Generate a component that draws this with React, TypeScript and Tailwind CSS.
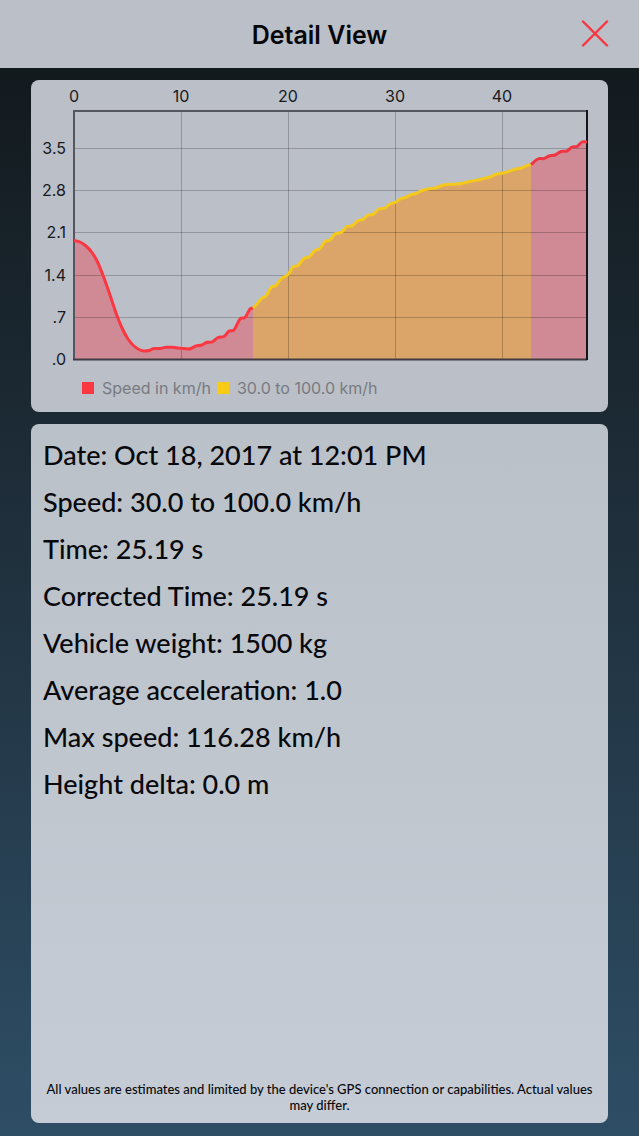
import React from 'react';

type Point = [number, number];

const details = [
  { label: 'Date', value: 'Oct 18, 2017 at 12:01 PM' },
  { label: 'Speed', value: '30.0 to 100.0 km/h' },
  { label: 'Time', value: '25.19 s' },
  { label: 'Corrected Time', value: '25.19 s' },
  { label: 'Vehicle weight', value: '1500 kg' },
  { label: 'Average acceleration', value: '1.0' },
  { label: 'Max speed', value: '116.28 km/h' },
  { label: 'Height delta', value: '0.0 m' },
];

const xTicks = [
  { x: 43, label: '0' },
  { x: 150, label: '10' },
  { x: 257, label: '20' },
  { x: 364, label: '30' },
  { x: 471, label: '40' },
];

const yTicks = [
  { y: 68, label: '3.5' },
  { y: 110, label: '2.8' },
  { y: 152, label: '2.1' },
  { y: 195, label: '1.4' },
  { y: 237, label: '.7' },
  { y: 279, label: '.0' },
];

const before: Point[] = [
  [43, 160.5], [49, 162], [55, 166], [61, 172.5], [67, 183], [73, 198], [79, 215], [85, 233],
  [91, 248], [97, 259], [103, 266], [109, 270], [113, 271], [118, 270.5], [122, 268.7], [129, 268.5],
  [135, 267.3], [141, 267.3], [150, 268.3], [157, 269], [161, 268], [165, 266], [171, 265],
  [176, 262.3], [181, 262], [187, 257.5], [193, 256.5], [198, 251], [203, 250], [209, 239],
  [214, 237.5], [219, 229], [222, 228],
];

const range: Point[] = [
  [222, 228], [226, 224], [231, 218], [235, 216], [240, 207.5], [245, 205.5], [250, 199], [257, 194.5],
  [262, 187], [267, 185.5], [273, 178.5], [278, 177], [284, 170.5], [289, 168.5], [294, 161.5],
  [299, 160], [304, 154], [310, 152.5], [316, 146.5], [321, 146], [327, 140.5], [332, 139.5],
  [337, 135], [342, 134.5], [348, 129], [354, 128], [359, 124], [365, 122], [370, 118.5],
  [375, 117.5], [380, 114.5], [385, 113.5], [390, 111], [396, 109.2], [405, 107.8], [412, 105],
  [419, 104.3], [427, 104], [439, 101.5], [451, 99], [459, 97], [466, 94], [472, 93], [479, 91],
  [485, 89], [491, 88], [496, 85.5], [500, 84.5],
];

const after: Point[] = [
  [500, 84.5], [507, 79], [513, 78.5], [518, 76], [524, 75], [530, 71.5], [536, 71], [541, 67],
  [546, 66.5], [551, 62], [556, 62],
];

// Catmull-Rom spline through the samples
const toLine = (pts: Point[]) =>
  pts.reduce((d, p, i) => {
    if (i === 0) return `M${p[0]} ${p[1]}`;
    const p0 = pts[Math.max(i - 2, 0)];
    const p1 = pts[i - 1];
    const p3 = pts[Math.min(i + 1, pts.length - 1)];
    const c1 = `${p1[0] + (p[0] - p0[0]) / 6} ${p1[1] + (p[1] - p0[1]) / 6}`;
    const c2 = `${p[0] - (p3[0] - p1[0]) / 6} ${p[1] - (p3[1] - p1[1]) / 6}`;
    return `${d} C${c1} ${c2} ${p[0]} ${p[1]}`;
  }, '');

const toArea = (pts: Point[]) => `${toLine(pts)} V279.5 H${pts[0][0]} Z`;

const SpeedChart = () => (
  <svg
    viewBox="0 0 577 286"
    className="block w-full overflow-visible font-['Inter',sans-serif]"
    role="img"
    aria-label="Speed chart"
  >
    {/* Filled areas */}
    <path d={toArea(before)} fill="#ee4150" fillOpacity="0.42" />
    <path d={toArea(range)} fill="#f0932a" fillOpacity="0.6" />
    <path d={toArea(after)} fill="#ee4150" fillOpacity="0.42" />

    {/* Grid */}
    <g stroke="#000" strokeOpacity="0.22" strokeWidth="1">
      {xTicks.slice(1).map((t) => (
        <path key={t.label} d={`M${t.x + 0.5} 31V279`} />
      ))}
      {yTicks.slice(0, 5).map((t) => (
        <path key={t.label} d={`M43 ${t.y + 0.5}H556`} />
      ))}
    </g>

    {/* Frame */}
    <path d="M43 280V31H556" fill="none" stroke="#55575e" strokeWidth="2" />
    <path d="M42 279.5H556" stroke="#3f3c42" strokeWidth="2" />
    <path d="M556 30V280" stroke="#17151a" strokeWidth="2" />

    <g fill="none" strokeWidth="3" strokeLinejoin="round">
      <path d={toLine(before)} stroke="#fb3742" />
      <path d={toLine(range)} stroke="#f5c91c" />
      <path d={toLine(after)} stroke="#f13442" />
    </g>

    <g fill="#17191d" fontSize="16">
      {xTicks.map((t) => (
        <text key={t.label} x={t.x} y="22" textAnchor="middle">{t.label}</text>
      ))}
      {yTicks.map((t) => (
        <text key={t.label} x="35" y={t.y + 6} textAnchor="end">{t.label}</text>
      ))}
    </g>
  </svg>
);

const App = () => {
  return (
    <div className="flex min-h-screen flex-col bg-linear-to-b from-[#11171a] via-[#20313e] to-[#2e4e66]">
      {/* Header */}
      <header className="grid h-[68px] grid-cols-[1fr_auto_1fr] items-center bg-[#bbbfc8] px-6">
        <h1 className="col-start-2 pt-0.5 font-['Inter',sans-serif] text-[25px] leading-8 font-semibold text-[#050608]">
          Detail View
        </h1>
        <button type="button" aria-label="Close" className="justify-self-end p-1.5">
          <svg viewBox="0 0 28 28" className="size-7" fill="none" stroke="#f7363f" strokeWidth="2.4" strokeLinecap="round">
            <path d="M2 1.5L26 25.5M26 1.5L2 25.5" />
          </svg>
        </button>
      </header>

      <main className="flex flex-1 flex-col gap-3 px-[31px] pt-3 pb-[13px]">
        {/* Chart */}
        <section className="rounded-lg bg-[#bbbfc7] pb-3.5">
          <SpeedChart />
          <ul className="mt-3 flex gap-1.5 pl-[51px] font-['Inter',sans-serif] text-base leading-5 text-[#777b82]">
            <li className="flex items-center gap-2">
              <span className="size-3 bg-[#fb3742]" />
              Speed in km/h
            </li>
            <li className="flex items-center gap-2">
              <span className="size-3 bg-[#f9cb16]" />
              30.0 to 100.0 km/h
            </li>
          </ul>
        </section>

        {/* Details */}
        <section className="flex flex-1 flex-col rounded-lg bg-linear-to-b from-[#bbc1c8] to-[#c5ccd5] px-3 pt-[7px] pb-2.5 font-['Lato',sans-serif] font-medium text-[#08090c]">
          <ul className="text-[27px] leading-[47px]">
            {details.map((item) => (
              <li key={item.label}>
                {item.label}: {item.value}
              </li>
            ))}
          </ul>
          <p className="mt-auto text-center text-[13px] leading-4">
            All values are estimates and limited by the device's GPS connection or capabilities. Actual values may differ.
          </p>
        </section>
      </main>
    </div>
  );
};

export default App;
